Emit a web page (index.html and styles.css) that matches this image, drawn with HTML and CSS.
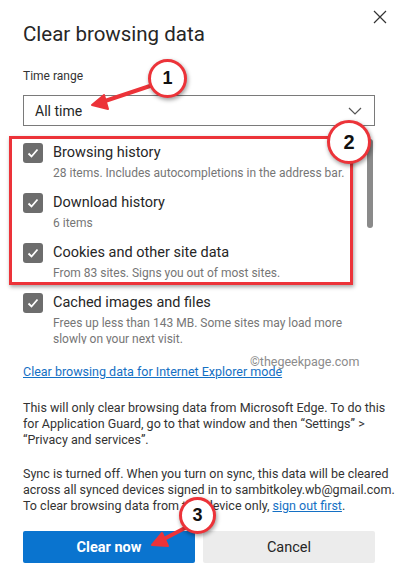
FILE: index.html
```html
<!DOCTYPE html>
<html lang="en">
<head>
<meta charset="utf-8">
<title>Clear browsing data</title>
<link rel="stylesheet" href="styles.css">
</head>
<body>
<div class="dialog">
  <div class="header">
    <h1 class="title">Clear browsing data</h1>
    <button class="close" aria-label="Close">
      <svg width="14" height="14" viewBox="0 0 14 14"><path d="M1 1L13 13M13 1L1 13" stroke="#333" stroke-width="1.2" fill="none"/></svg>
    </button>
  </div>
  <div class="label">Time range</div>
  <div class="select">
    <span>All time</span>
    <svg class="chev" width="14" height="8" viewBox="0 0 14 8"><path d="M1 1L7 7L13 1" stroke="#555" stroke-width="1.2" fill="none"/></svg>
  </div>
  <div class="list">
    <div class="item">
      <span class="cb"><svg width="20" height="20" viewBox="0 0 20 20"><path d="M5.5 10.5L8.5 13.5L14.5 6.5" stroke="#fff" stroke-width="1.8" fill="none"/></svg></span>
      <div class="txt">
        <div class="name">Browsing history</div>
        <div class="desc">28 items. Includes autocompletions in the address bar.</div>
      </div>
    </div>
    <div class="item">
      <span class="cb"><svg width="20" height="20" viewBox="0 0 20 20"><path d="M5.5 10.5L8.5 13.5L14.5 6.5" stroke="#fff" stroke-width="1.8" fill="none"/></svg></span>
      <div class="txt">
        <div class="name">Download history</div>
        <div class="desc">6 items</div>
      </div>
    </div>
    <div class="item">
      <span class="cb"><svg width="20" height="20" viewBox="0 0 20 20"><path d="M5.5 10.5L8.5 13.5L14.5 6.5" stroke="#fff" stroke-width="1.8" fill="none"/></svg></span>
      <div class="txt">
        <div class="name">Cookies and other site data</div>
        <div class="desc">From 83 sites. Signs you out of most sites.</div>
      </div>
    </div>
    <div class="item">
      <span class="cb"><svg width="20" height="20" viewBox="0 0 20 20"><path d="M5.5 10.5L8.5 13.5L14.5 6.5" stroke="#fff" stroke-width="1.8" fill="none"/></svg></span>
      <div class="txt">
        <div class="name">Cached images and files</div>
        <div class="desc">Frees up less than 143 MB. Some sites may load more<br>slowly on your next visit.</div>
      </div>
    </div>
    <div class="scrollbar"></div>
  </div>
  <a class="ie-link" href="#">Clear browsing data for Internet Explorer mode</a>
  <p class="para">This will only clear browsing data from Microsoft Edge. To do this<br>for Application Guard, go to that window and then “Settings” &gt;<br>“Privacy and services”.</p>
  <p class="para sync">Sync is turned off. When you turn on sync, this data will be cleared<br>across all synced devices signed in to sambitkoley.wb@gmail.com.<br>To clear browsing data from this device only, <a href="#" class="inline-link">sign out first</a>.</p>
  <div class="buttons">
    <button class="btn primary">Clear now</button>
    <button class="btn secondary">Cancel</button>
  </div>
</div>

<div class="watermark">©thegeekpage.com</div>

<div class="redbox"></div>
<svg class="arrows" width="399" height="584" viewBox="0 0 399 584">
  <g fill="#ec3339" stroke="#ec3339" stroke-linecap="round" stroke-linejoin="round">
    <line x1="150" y1="86" x2="102" y2="102" stroke-width="4"/>
    <polygon points="92,105 104,95 108,109" stroke-width="2"/>
    <line x1="185" y1="528" x2="162" y2="540" stroke-width="4"/>
    <polygon points="152,545 162,533 168,546" stroke-width="2"/>
  </g>
</svg>
<div class="badge b1">1</div>
<div class="badge b2">2</div>
<div class="badge b3">3</div>
</body>
</html>
```
FILE: styles.css
```css
* { box-sizing: border-box; }
html, body { margin: 0; padding: 0; background: #fff; }
body {
  width: 399px;
  height: 584px;
  overflow: hidden;
  font-family: Roboto, "Noto Sans", sans-serif;
  color: #242424;
  position: relative;
}
.dialog { padding: 0 24px 0 23px; }
.header {
  display: flex;
  justify-content: space-between;
  align-items: flex-start;
}
.title {
  margin: 20px 0 0;
  font-size: 20.5px;
  line-height: 28px;
  font-weight: 400;
  color: #262626;
}
.close {
  margin: 10px -12px 0 0;
  padding: 0;
  border: 0;
  background: none;
  width: 14px;
  height: 14px;
  display: block;
}
.close svg { display: block; }
.label {
  margin-top: 20px;
  font-size: 12px;
  line-height: 16px;
  color: #333;
}
.select {
  margin-top: 11px;
  height: 31px;
  border: 1px solid #7a7a7a;
  display: flex;
  align-items: center;
  justify-content: space-between;
  padding: 0 12px 0 11px;
  font-size: 14px;
  color: #262626;
  width: 352px;
}
.list {
  position: relative;
  margin-top: 9px;
  height: 209px;
  overflow: hidden;
  padding-top: 8px;
  display: flex;
  flex-direction: column;
  gap: 12px;
  width: 352px;
}
.item { display: flex; gap: 10px; align-items: flex-start; }
.cb {
  flex: none;
  width: 20px;
  height: 20px;
  background: #6d6d6d;
  border-radius: 3px;
}
.cb svg { display: block; }
.txt { width: 310px; white-space: nowrap; }
.name { font-size: 14.5px; line-height: 20px; color: #262626; }
.desc { margin-top: 2px; font-size: 12px; line-height: 16px; color: #767676; }
.scrollbar {
  position: absolute;
  left: 344px;
  top: 4px;
  width: 6px;
  height: 89px;
  border-radius: 3px;
  background: #8a8a8a;
}
.ie-link {
  display: inline-block;
  margin-top: 19px;
  font-size: 12.5px;
  line-height: 18px;
  color: #1470c4;
  text-decoration: underline;
}
.para {
  margin: 19px 0 0;
  font-size: 12.5px;
  line-height: 16px;
  color: #333;
  white-space: nowrap;
}
.para.sync { margin-top: 18px; }
.inline-link { color: #1470c4; text-decoration: underline; }
.buttons {
  margin-top: 17px;
  display: flex;
  gap: 8px;
  width: 352px;
}
.btn {
  flex: 1;
  height: 32px;
  border: 0;
  border-radius: 2px;
  font-family: inherit;
  font-size: 14.5px;
}
.primary { background: #0a74cf; color: #fff; font-weight: 700; }
.secondary { background: #ececec; color: #262626; }
.watermark {
  position: absolute;
  left: 250px;
  top: 354px;
  font-size: 12.5px;
  line-height: 16px;
  color: #8c8c8c;
}
.redbox {
  position: absolute;
  left: 9px;
  top: 136px;
  width: 344px;
  height: 149px;
  border: 3px solid #ec3339;
  box-shadow: 1px 2px 4px rgba(0,0,0,0.35);
}
.arrows { position: absolute; left: 0; top: 0; pointer-events: none; }
.badge {
  position: absolute;
  border-radius: 50%;
  background: #fff;
  border: 3px solid #ec3339;
  box-shadow: 1px 2px 4px rgba(0,0,0,0.4);
  font-family: "Liberation Sans", Arial, sans-serif;
  font-weight: 700;
  color: #111;
  display: flex;
  align-items: center;
  justify-content: center;
}
.b1 { left: 148px; top: 59px; width: 39px; height: 39px; font-size: 18px; }
.b2 { left: 327px; top: 120px; width: 44px; height: 44px; font-size: 20px; }
.b3 { left: 179px; top: 497px; width: 37px; height: 37px; font-size: 18px; }
```
